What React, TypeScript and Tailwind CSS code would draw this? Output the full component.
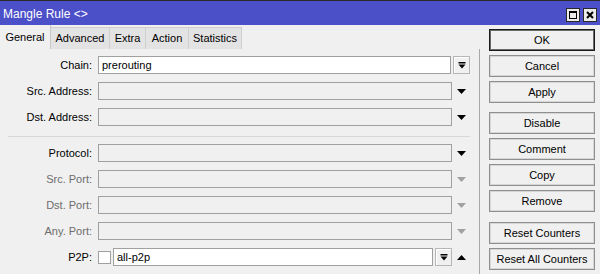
import React from "react";

const font = { fontFamily: '"Liberation Sans", Arial, sans-serif' };

function DownTri({ gray }: { gray?: boolean }) {
  return (
    <svg width="9" height="5" viewBox="0 0 9 5">
      <polygon points="0,0 9,0 4.5,5" fill={gray ? "#a0a0a0" : "#000"} />
    </svg>
  );
}

function UpTri() {
  return (
    <svg width="9" height="5" viewBox="0 0 9 5">
      <polygon points="0,5 9,5 4.5,0" fill="#000" />
    </svg>
  );
}

function DropBtn() {
  return (
    <div className="w-[17px] h-[18px] border border-[#b5b5b5] bg-[#f0f0f0] shadow-[inset_1px_1px_0_#fff] flex items-center justify-center">
      <svg width="8" height="7" viewBox="0 0 8 7">
        <rect x="0.5" y="0" width="7" height="1.5" fill="#000" />
        <polygon points="0.5,2.5 7.5,2.5 4,6.5" fill="#000" />
      </svg>
    </div>
  );
}

function Row({
  label,
  disabled,
  children,
}: {
  label: string;
  disabled?: boolean;
  children: React.ReactNode;
}) {
  return (
    <div className="flex items-center h-[18px]">
      <div
        className={`w-[92px] text-right text-[11px] leading-none ${
          disabled ? "text-[#6d6d6d]" : "text-black"
        }`}
      >
        {label}
      </div>
      <div className="ml-[6px] flex-1 flex items-center h-full">{children}</div>
    </div>
  );
}

function EmptyInput() {
  return <div className="flex-1 h-[18px] border border-[#a0a0a0] bg-[#f0f0f0]" />;
}

function Arrow({ gray, up }: { gray?: boolean; up?: boolean }) {
  return (
    <div className="w-[18px] h-full flex items-center justify-center pl-[1px]">
      {up ? <UpTri /> : <DownTri gray={gray} />}
    </div>
  );
}

function Btn({ label, def, mt }: { label: string; def?: boolean; mt?: string }) {
  return (
    <div
      className={`h-[22px] w-[106px] flex items-center justify-center text-[11px] text-black bg-[#f0f0f0] ${
        def
          ? "border border-[#1a1a1a] shadow-[inset_0_0_0_1px_#6a6a6a]"
          : "border border-[#8f8f8f] shadow-[inset_0_0_0_1px_#d6d6d6]"
      } ${mt ?? ""}`}
    >
      {label}
    </div>
  );
}

export default function App() {
  const tabs = [
    { t: "Advanced", w: "w-[59px]" },
    { t: "Extra", w: "w-[36px]" },
    { t: "Action", w: "w-[43px]" },
    { t: "Statistics", w: "w-[53px]" },
  ];
  return (
    <div className="w-[600px] h-[274px] bg-[#f0f0f0] flex flex-col overflow-hidden" style={font}>
      {/* title bar */}
      <div className="h-[25px] border-t border-[#2a2a2a] bg-[#4b50c8] flex items-center justify-between pl-[3px] pr-[3px]">
        <span className="text-white text-[12px] leading-none pt-[2px]">Mangle Rule &lt;&gt;</span>
        <div className="flex gap-[3px] pt-[4px]">
          <div className="w-[14px] h-[14px] bg-[#ececec] border border-[#2a2a2a] flex items-center justify-center">
            <div className="w-[8px] h-[8px] border border-black border-t-2" />
          </div>
          <div className="w-[14px] h-[14px] bg-[#ececec] border border-[#2a2a2a] flex items-center justify-center">
            <svg width="8" height="8" viewBox="0 0 8 8">
              <path d="M1 1 L7 7 M7 1 L1 7" stroke="#000" strokeWidth="2" />
            </svg>
          </div>
        </div>
      </div>

      <div className="flex flex-1">
        {/* left column */}
        <div className="w-[480px] flex flex-col">
          <div className="h-[24px] flex items-end">
            <div className="w-[51px] h-[24px] flex items-center justify-center text-[11px] text-black bg-[#f0f0f0] border-r border-[#c8c8c8]">
              General
            </div>
            {tabs.map((x) => (
              <div
                key={x.t}
                className={`${x.w} h-[22px] flex items-center justify-center text-[11px] text-black bg-[#e3e3e3] border-t border-r border-[#cfcfcf]`}
              >
                {x.t}
              </div>
            ))}
          </div>
          <div className="flex-1 border-r border-[#a8a8a8] pt-[7px] pr-[9px] flex flex-col">
            <div className="flex flex-col gap-[8px]">
              <Row label="Chain:">
                <div className="flex-1 h-[18px] border border-[#a0a0a0] bg-white flex items-center pl-[3px] text-[11px] text-black">
                  prerouting
                </div>
                <div className="ml-[2px]">
                  <DropBtn />
                </div>
              </Row>
              <Row label="Src. Address:">
                <EmptyInput />
                <Arrow />
              </Row>
              <Row label="Dst. Address:">
                <EmptyInput />
                <Arrow />
              </Row>
            </div>
            <div className="ml-[8px] mt-[10px] mb-[7px] h-[1px] bg-[#d8d8d8]" />
            <div className="flex flex-col gap-[8px]">
              <Row label="Protocol:">
                <EmptyInput />
                <Arrow />
              </Row>
              <Row label="Src. Port:" disabled>
                <EmptyInput />
                <Arrow gray />
              </Row>
              <Row label="Dst. Port:" disabled>
                <EmptyInput />
                <Arrow gray />
              </Row>
              <Row label="Any. Port:" disabled>
                <EmptyInput />
                <Arrow gray />
              </Row>
              <Row label="P2P:">
                <div className="w-[13px] h-[13px] border border-[#a0a0a0] bg-white" />
                <div className="ml-[2px] flex-1 h-[18px] border border-[#a0a0a0] bg-white flex items-center pl-[3px] text-[11px] text-black">
                  all-p2p
                </div>
                <div className="ml-[2px]">
                  <DropBtn />
                </div>
                <Arrow up />
              </Row>
            </div>
          </div>
        </div>

        {/* right column */}
        <div className="flex-1 pl-[9px] pt-[4px] flex flex-col gap-[4px]">
          <Btn label="OK" def />
          <Btn label="Cancel" />
          <Btn label="Apply" />
          <Btn label="Disable" mt="mt-[5px]" />
          <Btn label="Comment" />
          <Btn label="Copy" />
          <Btn label="Remove" />
          <Btn label="Reset Counters" mt="mt-[6px]" />
          <Btn label="Reset All Counters" />
        </div>
      </div>
    </div>
  );
}
